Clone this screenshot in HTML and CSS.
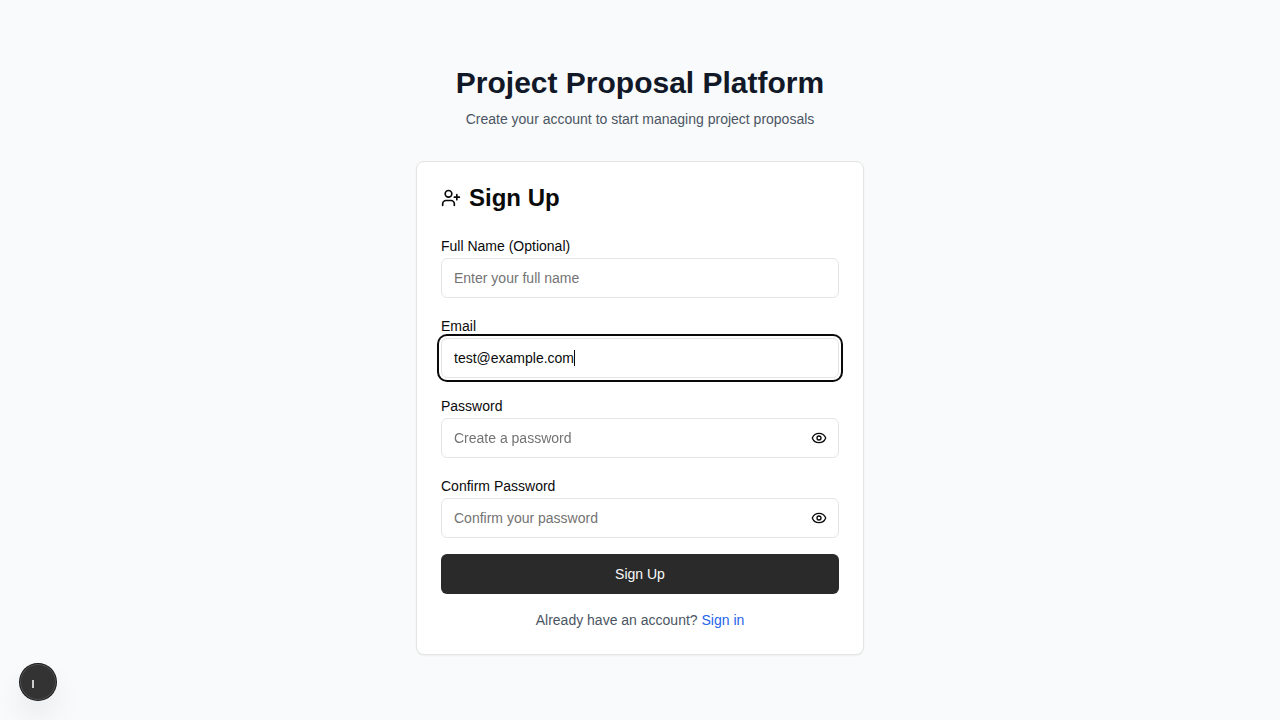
FILE: index.html
```html
<!DOCTYPE html>
<html lang="en">
<head>
<meta charset="utf-8">
<meta name="viewport" content="width=device-width, initial-scale=1">
<title>Project Proposal Platform</title>
<link rel="stylesheet" href="styles.css">
<script src="script.js" defer></script>
</head>
<body>
<main class="page">
  <div class="shell">
    <header class="intro">
      <h1 class="intro-title">Project Proposal Platform</h1>
      <p class="intro-text">Create your account to start managing project proposals</p>
    </header>
    <section class="card">
      <h2 class="card-title">
        <svg class="icon icon-user" viewBox="0 0 24 24" aria-hidden="true"><path d="M16 21v-2a4 4 0 0 0-4-4H6a4 4 0 0 0-4 4v2"/><circle cx="9" cy="7" r="4"/><line x1="19" x2="19" y1="8" y2="14"/><line x1="22" x2="16" y1="11" y2="11"/></svg>
        Sign Up
      </h2>
      <form class="form">
        <div class="field">
          <label class="label" for="name">Full Name (Optional)</label>
          <input class="input" id="name" type="text" placeholder="Enter your full name">
        </div>
        <div class="field">
          <label class="label" for="email">Email</label>
          <div class="control">
            <input class="input input-email" id="email" type="text" inputmode="email" value="test@example.com" autofocus>
            <span class="caret" id="caret" aria-hidden="true"></span>
          </div>
        </div>
        <div class="field">
          <label class="label" for="password">Password</label>
          <div class="control">
            <input class="input input-secret" id="password" type="password" placeholder="Create a password">
            <button class="reveal" type="button" aria-label="Show password"><svg class="icon icon-eye" viewBox="0 0 24 24" aria-hidden="true"><path d="M2.062 12.348a1 1 0 0 1 0-.696 10.75 10.75 0 0 1 19.876 0 1 1 0 0 1 0 .696 10.75 10.75 0 0 1-19.876 0"/><circle cx="12" cy="12" r="3"/></svg></button>
          </div>
        </div>
        <div class="field">
          <label class="label" for="confirm">Confirm Password</label>
          <div class="control">
            <input class="input input-secret" id="confirm" type="password" placeholder="Confirm your password">
            <button class="reveal" type="button" aria-label="Show confirmed password"><svg class="icon icon-eye" viewBox="0 0 24 24" aria-hidden="true"><path d="M2.062 12.348a1 1 0 0 1 0-.696 10.75 10.75 0 0 1 19.876 0 1 1 0 0 1 0 .696 10.75 10.75 0 0 1-19.876 0"/><circle cx="12" cy="12" r="3"/></svg></button>
          </div>
        </div>
        <button class="submit" type="submit">Sign Up</button>
      </form>
      <p class="switch">Already have an account? <a class="link" href="#signin">Sign in</a></p>
    </section>
  </div>
</main>
<button class="devtools" type="button" aria-label="Open developer tools"><svg class="devtools-mark" viewBox="0 0 36 36" aria-hidden="true"><rect x="12" y="16" width="2" height="8"/></svg></button>
</body>
</html>
```
FILE: styles.css
```css
*, *::before, *::after { box-sizing: border-box; }

body {
  margin: 0;
  background: #f9fafb;
  color: #0a0a0a;
  font-family: "Liberation Sans", Arial, sans-serif;
  font-size: 14px;
  line-height: 20px;
}

h1, h2, p { margin: 0; }

button, input { font: inherit; color: inherit; }

.page {
  display: flex;
  align-items: center;
  justify-content: center;
  min-height: 100vh;
  padding: 16px;
}

.shell { width: 100%; max-width: 448px; }

.intro {
  display: grid;
  gap: 8px;
  margin-bottom: 32px;
  text-align: center;
}

.intro-title {
  color: #111827;
  font-size: 30px;
  line-height: 36px;
}

.intro-text, .switch { color: #4b5563; }

.card {
  padding: 24px;
  border: 1px solid #e5e5e5;
  border-radius: 8px;
  background: #fff;
  box-shadow: 0 1px 2px rgba(0, 0, 0, 0.05);
}

.card-title {
  display: flex;
  align-items: center;
  gap: 8px;
  margin-bottom: 24px;
  font-size: 24px;
  line-height: 24px;
}

.icon {
  display: block;
  fill: none;
  stroke: currentColor;
  stroke-width: 2;
  stroke-linecap: round;
  stroke-linejoin: round;
}

.icon-user { width: 20px; height: 20px; }
.icon-eye { width: 16px; height: 16px; }

.form { display: grid; gap: 16px; }

.label { display: block; line-height: 24px; }

.input {
  display: block;
  width: 100%;
  height: 40px;
  padding: 8px 12px;
  border: 1px solid #e5e5e5;
  border-radius: 6px;
  background: #fff;
  outline: none;
}

.input-secret { padding-right: 40px; }
.input-email { caret-color: transparent; }
.input::placeholder { color: #737373; opacity: 1; }
.input:focus { box-shadow: 0 0 0 2px #fff, 0 0 0 4px #0a0a0a; }

.control { position: relative; }

.caret {
  position: absolute;
  top: 12px;
  left: 12px;
  display: none;
  width: 1px;
  height: 16px;
  background: #0a0a0a;
  pointer-events: none;
}

.input:focus + .caret { display: block; }

.reveal {
  position: absolute;
  top: 0;
  right: 0;
  height: 100%;
  padding: 0 12px;
  border: 0;
  background: transparent;
}

.submit {
  height: 40px;
  border: 0;
  border-radius: 6px;
  background: #2a2a2a;
  color: #fafafa;
}

.switch { margin-top: 16px; text-align: center; }
.link { color: #2563eb; text-decoration: none; }

.devtools {
  position: fixed;
  left: 20px;
  bottom: 20px;
  width: 36px;
  height: 36px;
  padding: 0;
  border: 0;
  border-radius: 50%;
  background: #333;
  box-shadow: 0 0 0 1px #171717, inset 0 0 0 1px rgba(255, 255, 255, 0.14), 0 16px 32px -8px rgba(0, 0, 0, 0.24);
}

.devtools-mark { display: block; width: 100%; fill: #ccc; }
```
FILE: script.js
```js
const email = document.getElementById("email");
const caret = document.getElementById("caret");
const pen = document.createElement("canvas").getContext("2d");

// Keeps the caret after the text that precedes the insertion point.
function placeCaret() {
  const style = getComputedStyle(email);
  pen.font = `${style.fontSize} ${style.fontFamily}`;
  const text = email.value.slice(0, email.selectionEnd);
  const start = parseFloat(style.paddingLeft) + parseFloat(style.borderLeftWidth);
  caret.style.left = `${Math.round(start + pen.measureText(text).width)}px`;
}

email.addEventListener("input", placeCaret);
document.addEventListener("selectionchange", placeCaret);
email.focus();
email.setSelectionRange(email.value.length, email.value.length);
placeCaret();
```
